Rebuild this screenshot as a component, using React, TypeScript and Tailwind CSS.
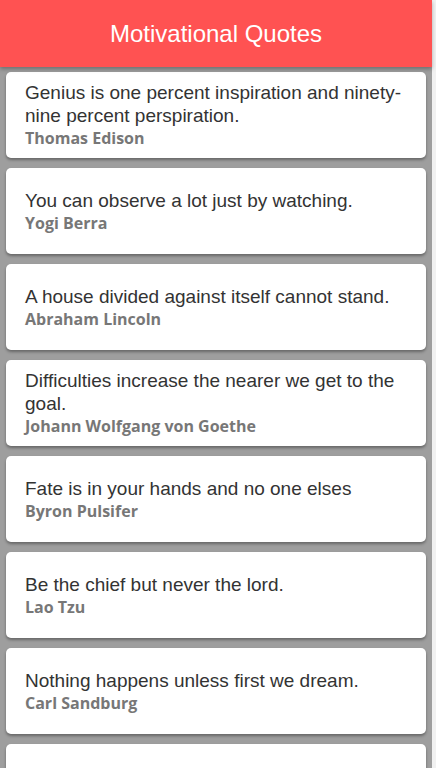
import React from 'react'

const quotes = [
  { text: 'Genius is one percent inspiration and ninety-nine percent perspiration.', author: 'Thomas Edison' },
  { text: 'You can observe a lot just by watching.', author: 'Yogi Berra' },
  { text: 'A house divided against itself cannot stand.', author: 'Abraham Lincoln' },
  { text: 'Difficulties increase the nearer we get to the goal.', author: 'Johann Wolfgang von Goethe' },
  { text: 'Fate is in your hands and no one elses', author: 'Byron Pulsifer' },
  { text: 'Be the chief but never the lord.', author: 'Lao Tzu' },
  { text: 'Nothing happens unless first we dream.', author: 'Carl Sandburg' },
]

const QuoteCard = ({ item }: any) => {
  return (
    <div className="mx-[6px] mb-[10px] h-[86px] shrink-0 rounded-[5px] bg-white pl-[19px] pr-[12px] flex flex-col justify-center shadow-[0_2px_3px_rgba(0,0,0,0.35)]">
      {item && (
        <>
          <div className="text-[19px] leading-[23px] text-[#333] font-['Liberation_Sans',Arial,sans-serif]">{item.text}</div>
          <div className="text-[16px] leading-[22px] font-bold text-[#777] font-['Open_Sans',sans-serif]">{item.author}</div>
        </>
      )}
    </div>
  )
}

const App = () => {
  return (
    <div className="flex h-[768px] w-[436px] overflow-hidden bg-[#f1f1f1]">
      <div className="flex w-[432px] flex-col bg-[#9e9e9e]">
        <div className="relative z-10 flex h-[67px] shrink-0 items-center justify-center bg-[#ff5252] shadow-[0_2px_4px_rgba(0,0,0,0.3)]">
          <h1 className="text-[24px] text-white font-['Liberation_Sans',Arial,sans-serif]">Motivational Quotes</h1>
        </div>
        <div className="flex flex-col pt-[5px]">
          {quotes.map((q, i) => (
            <QuoteCard key={i} item={q} />
          ))}
          <QuoteCard item={null} />
        </div>
      </div>
    </div>
  )
}

export default App
